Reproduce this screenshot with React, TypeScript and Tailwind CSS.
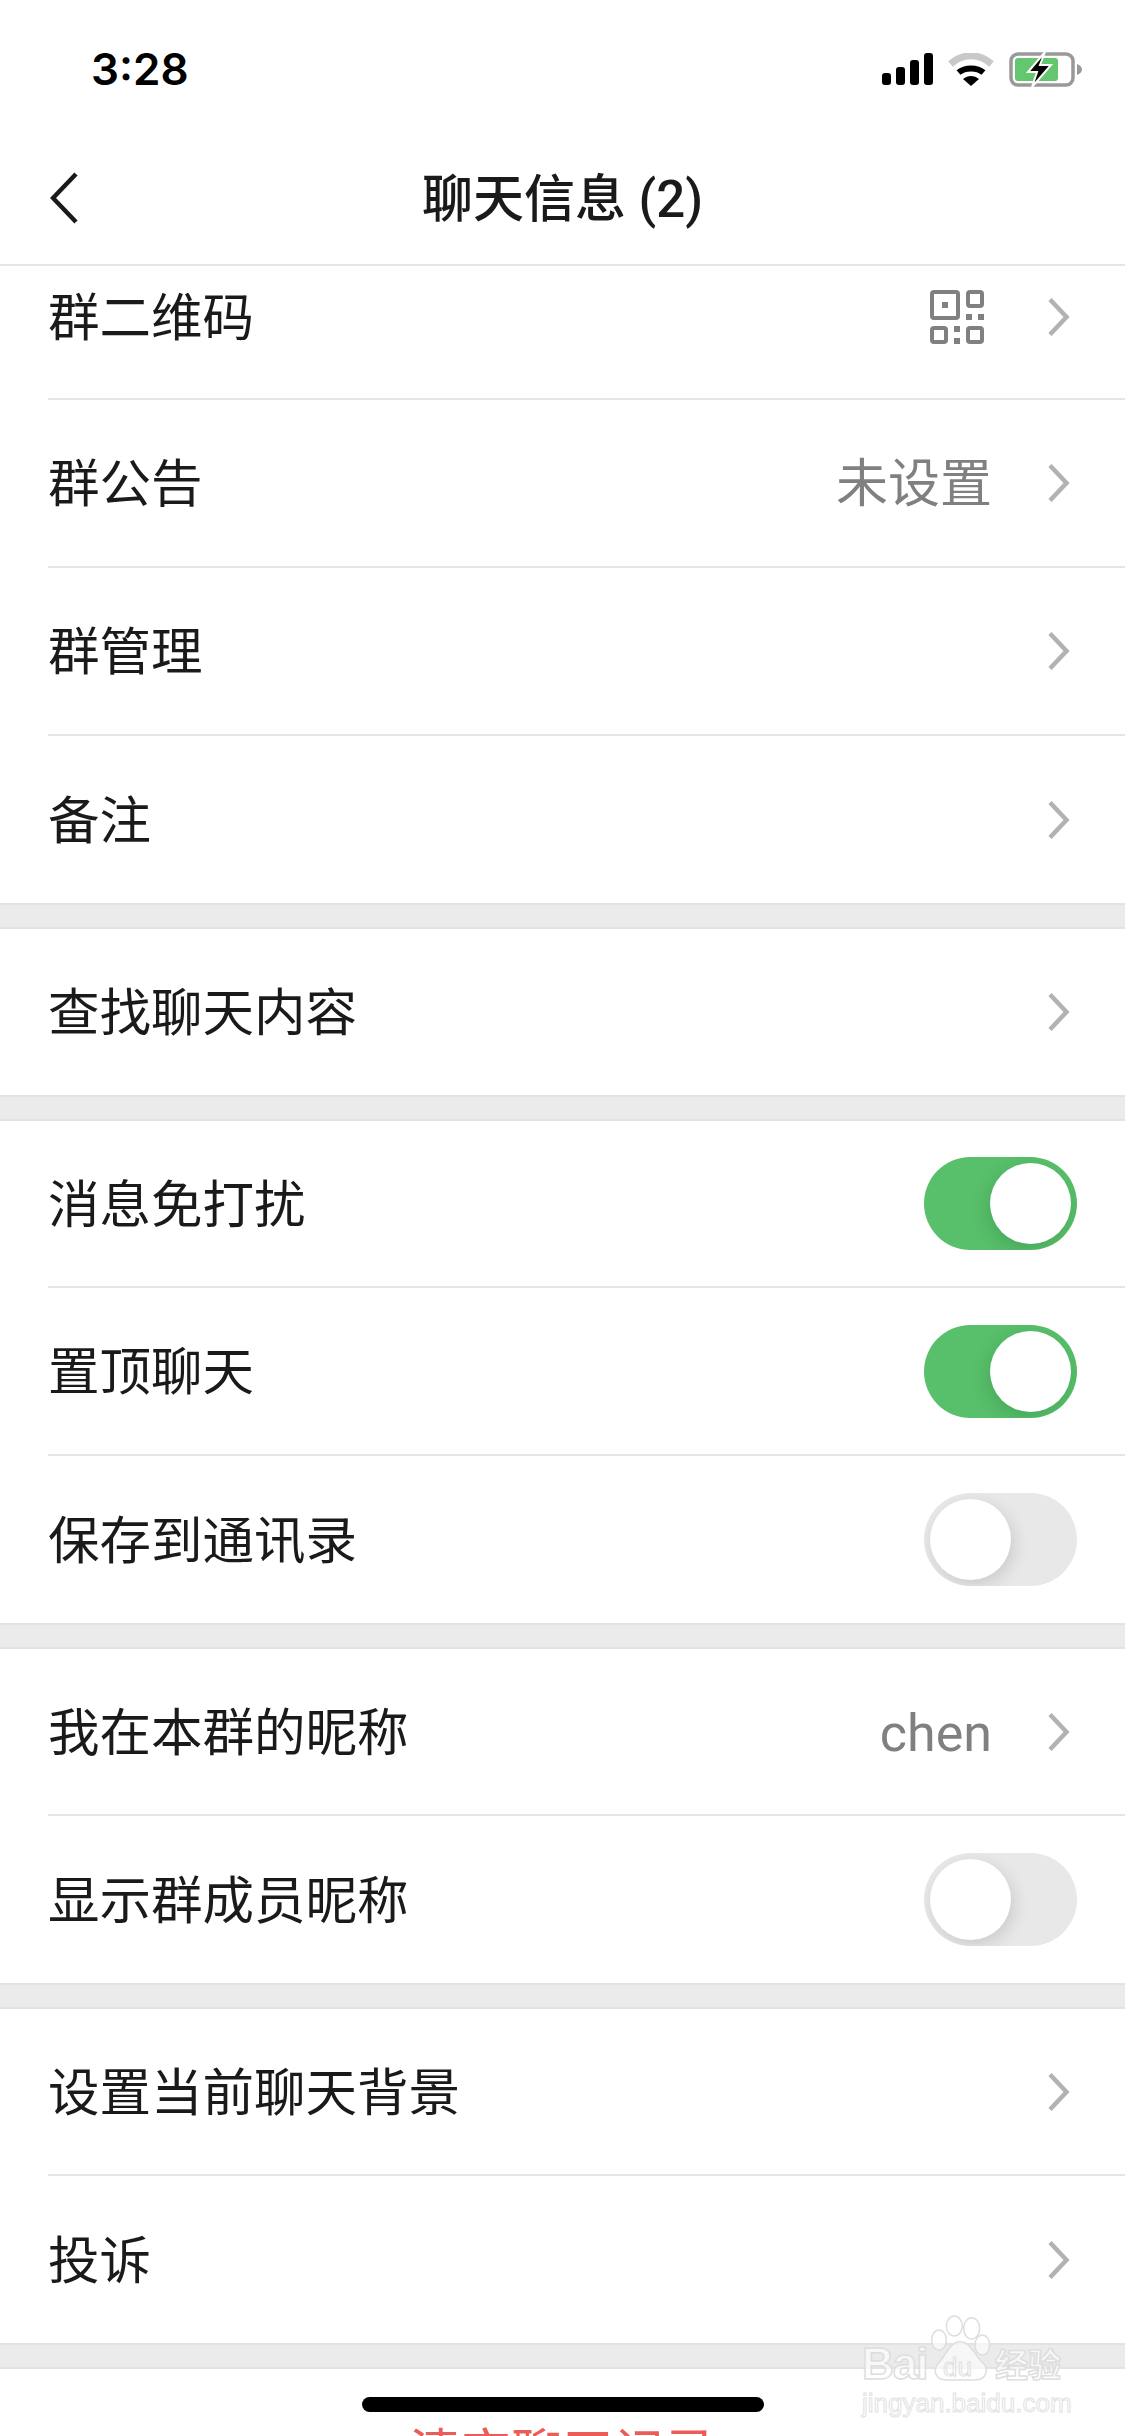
const Chevron = () => (
  <svg width="22" height="40" viewBox="0 0 22 40" fill="none" className="shrink-0">
    <path d="M2 2.5 18.5 20 2 37.5" stroke="#b2b2b2" strokeWidth="4.5" />
  </svg>
);

const QrIcon = () => (
  <svg width="54" height="54" viewBox="0 0 54 54" className="shrink-0" fill="none" stroke="#808080" strokeWidth="4">
    <rect x="2" y="2" width="26" height="26" rx="2" />
    <rect x="38" y="2" width="14" height="14" rx="2" />
    <rect x="2" y="38" width="14" height="14" rx="2" />
    <rect x="38" y="38" width="14" height="14" rx="2" />
    <g fill="#808080" stroke="none">
      <rect x="12" y="12" width="6" height="6" />
      <rect x="36" y="24" width="6" height="6" />
      <rect x="48" y="24" width="6" height="6" />
      <rect x="24" y="36" width="6" height="6" />
      <rect x="24" y="48" width="6" height="6" />
    </g>
  </svg>
);

const Toggle = ({ on }: { on: boolean }) =>
  on ? (
    <div className="flex h-[93px] w-[153px] shrink-0 items-center justify-end overflow-hidden rounded-full bg-[#58bf6b] pr-[6px]">
      <div className="size-[81px] rounded-full bg-white shadow-[-2px_6px_18px_rgba(20,90,40,0.22)]" />
    </div>
  ) : (
    <div className="flex h-[93px] w-[153px] shrink-0 items-center justify-start overflow-hidden rounded-full bg-[#e8e8e8] pl-[6px]">
      <div className="size-[81px] rounded-full bg-white shadow-[3px_5px_16px_rgba(0,0,0,0.13)]" />
    </div>
  );

const Row = ({
  label,
  value,
  qr,
  toggle,
  last,
  className = "h-[168px]",
}: {
  label: string;
  value?: string;
  qr?: boolean;
  toggle?: boolean;
  last?: boolean;
  className?: string;
}) => (
  <div className={`ml-[48px] flex shrink-0 items-center pr-[48px] ${last ? "" : "border-b-2 border-[#e6e6e6]"} ${className}`}>
    <span className="flex-1 pt-[4px] text-[51.5px] leading-none text-[#1a1a1a]">{label}</span>
    {value && <span className="mr-[56px] pt-[4px] text-[52px] leading-none text-[#808080]">{value}</span>}
    {qr && <div className="mr-[64px] flex"><QrIcon /></div>}
    {toggle === undefined ? <div className="mr-[7px] flex"><Chevron /></div> : <Toggle on={toggle} />}
  </div>
);

const Gap = () => <div className="h-[26px] shrink-0 border-y-2 border-[#e3e3e3] bg-[#ebebeb]" />;

const outline = "text-white/70 [-webkit-text-stroke:1.5px_#dedede]";

const Watermark = () => (
  <div className="absolute left-[862px] top-[2312px] flex w-[204px] flex-col gap-[8px]">
    <div className="flex h-[70px] items-end">
      <span className={`w-[63px] font-['Liberation_Sans',sans-serif] text-[44px] font-bold leading-[36px] tracking-[-1px] ${outline}`}>Bai</span>
      <div className="relative h-[70px] w-[70px] shrink-0">
        <svg width="70" height="70" viewBox="300 156 210 210" fill="#ffffff" fillOpacity="0.6" stroke="#dedede" strokeWidth="4.5">
          <ellipse cx="342" cy="240" rx="22" ry="30" />
          <ellipse cx="388" cy="198" rx="24" ry="30" />
          <ellipse cx="440" cy="205" rx="24" ry="32" />
          <ellipse cx="472" cy="255" rx="22" ry="30" />
          <path d="M405 245C375 245 360 290 340 310 320 335 335 360 365 360L450 360C485 360 495 325 470 305 450 285 435 245 405 245Z" />
        </svg>
        <span className="absolute bottom-[2px] left-[18px] font-['Liberation_Sans',sans-serif] text-[26px] leading-none text-white/40 [-webkit-text-stroke:1px_#dedede]">du</span>
      </div>
      <span className={`font-['Noto_Sans_CJK_SC',sans-serif] text-[33px] font-bold leading-[38px] ${outline}`}>经验</span>
    </div>
    <span className="font-['Liberation_Sans',sans-serif] text-[26px] leading-none text-white [-webkit-text-stroke:1px_#e2e2e2]">jingyan.baidu.com</span>
  </div>
);

export default function App() {
  return (
    <div className="relative flex h-[2436px] w-[1125px] flex-col overflow-hidden bg-white font-['Roboto','Noto_Sans_CJK_SC',sans-serif]">
      <div className="flex h-[132px] shrink-0 items-center justify-between pl-[91px] pr-[43px] pt-[6px]">
        <span className="font-['Inter',sans-serif] text-[44px] font-semibold leading-none text-black">3:28</span>
        <div className="flex items-center gap-[15px]">
          <svg width="51" height="32" viewBox="0 0 51 32" fill="#000">
            <rect x="0" y="20" width="9" height="12" rx="3" />
            <rect x="14" y="14" width="9" height="18" rx="3" />
            <rect x="28" y="7" width="9" height="25" rx="3" />
            <rect x="42" y="0" width="9" height="32" rx="3" />
          </svg>
          <svg width="46" height="33" viewBox="0 0 46 33" fill="none">
            <path d="M2.5 11C15 0 31 0 43.500 11" stroke="#c9c9c9" strokeWidth="7" />
            <path d="M10.500 19.500C17 14 29 14 35.500 19.500" stroke="#000" strokeWidth="6" />
            <path d="M23 33 15 26C20 22 26 22 31 26Z" fill="#000" />
          </svg>
          <svg width="73" height="35" viewBox="0 0 73 35" fill="none">
            <rect x="2" y="2" width="62" height="31" rx="7" stroke="#999" strokeWidth="3.500" />
            <rect x="6" y="6" width="43" height="23" rx="3" fill="#64c76f" />
            <path d="M68 12c3 1 5 3 5 5.500s-2 4.500-5 5.500Z" fill="#999" />
            <path d="M36 0 19 20h9l-5 15 19-22H31Z" fill="#000" stroke="#fff" strokeWidth="2" />
          </svg>
        </div>
      </div>

      <div className="grid h-[134px] shrink-0 grid-cols-[1fr_auto_1fr] items-center border-b-2 border-[#e6e6e6]">
        <svg width="28" height="52" viewBox="0 0 28 52" fill="none" className="ml-[50px]">
          <path d="M26 2 3 26l23 24" stroke="#1a1a1a" strokeWidth="4.500" />
        </svg>
        <span className="pt-[2px] text-[51px] font-medium leading-none text-[#1a1a1a]">聊天信息 (2)</span>
      </div>

      <Row label="群二维码" qr className="h-[134px] pb-[30px]" />
      <Row label="群公告" value="未设置" />
      <Row label="群管理" />
      <Row label="备注" last className="h-[167px]" />
      <Gap />
      <Row label="查找聊天内容" last className="h-[166px]" />
      <Gap />
      <Row label="消息免打扰" toggle={true} className="h-[167px]" />
      <Row label="置顶聊天" toggle={true} />
      <Row label="保存到通讯录" toggle={false} last className="h-[167px]" />
      <Gap />
      <Row label="我在本群的昵称" value="chen" className="h-[167px]" />
      <Row label="显示群成员昵称" toggle={false} last className="h-[167px]" />
      <Gap />
      <Row label="设置当前聊天背景" className="h-[167px]" />
      <Row label="投诉" last className="h-[167px]" />
      <Gap />
      <div className="flex h-[168px] shrink-0 items-center justify-center">
        <span className="text-[51px] leading-none text-[#ec5d57]">清空聊天记录</span>
      </div>

      <div className="absolute bottom-[24px] left-[362px] h-[15px] w-[402px] rounded-full bg-black" />
      <Watermark />
    </div>
  );
}
